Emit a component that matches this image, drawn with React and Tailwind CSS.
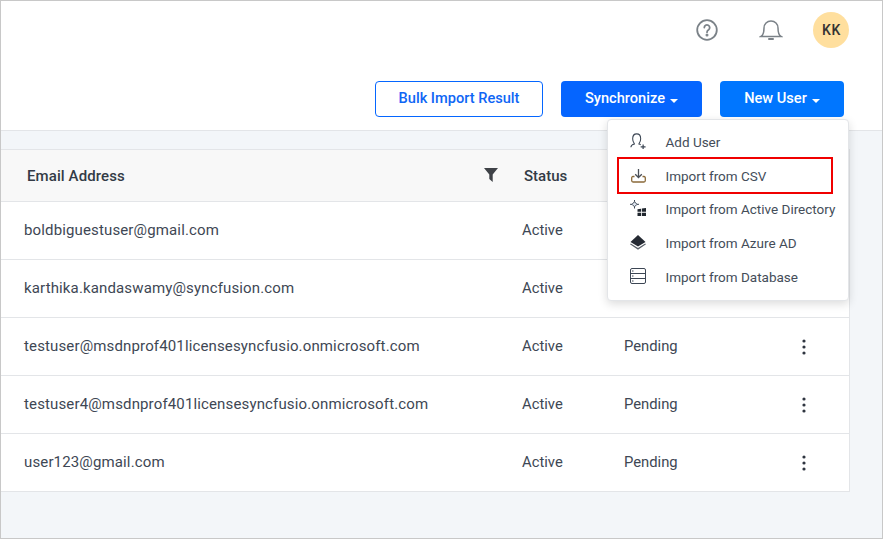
import React from "react";

const rows = [
  ["boldbiguestuser@gmail.com", "Active", ""],
  ["karthika.kandaswamy@syncfusion.com", "Active", ""],
  ["testuser@msdnprof401licensesyncfusio.onmicrosoft.com", "Active", "Pending"],
  ["testuser4@msdnprof401licensesyncfusio.onmicrosoft.com", "Active", "Pending"],
  ["user123@gmail.com", "Active", "Pending"],
];

const Caret = () => (
  <svg width="8" height="4" viewBox="0 0 8 4" className="ml-[5px] mt-[3px]"><path d="M0 0h8L4 4z" fill="#fff" /></svg>
);

const Dots = () => (
  <svg width="4" height="16" viewBox="0 0 4 16"><circle cx="2" cy="2" r="1.6" fill="#2f3540" /><circle cx="2" cy="8" r="1.6" fill="#2f3540" /><circle cx="2" cy="14" r="1.6" fill="#2f3540" /></svg>
);

const items = [
  ["Add User", <svg width="16" height="16" viewBox="0 0 18 18" fill="none" stroke="#3c4654" strokeWidth="1.2"><path d="M1 16c0-2 1.500-3 4-3.600 0-1-2-2-2-6C3 3 5 1 7.500 1S12 3 12 6.400c0 4-2 5-2 6 .8.200 1.500.500 2 .8" /><path d="M12 15.500h5.500M14.750 13v5" strokeWidth="1.400" /></svg>],
  ["Import from CSV", <svg width="15" height="14" viewBox="0 0 15 14" fill="none" strokeWidth="1.300" className="translate-y-px"><path d="M7.500 0v8.500M4.200 5.200 7.500 8.500 10.800 5.200" stroke="#4a4f57" /><path d="M3.500 7.500H2C1.200 7.500.7 8.200.7 9v2.500c0 .9.500 1.500 1.300 1.500h11c.8 0 1.300-.6 1.300-1.500V9c0-.8-.5-1.500-1.300-1.500h-1.500" stroke="#8a6a3a" /></svg>],
  ["Import from Active Directory", <svg width="16" height="16" viewBox="0 0 16 16"><path d="M4.500 1.800 7 4.300 4.500 6.800 2 4.300z" fill="#dfe6f0" stroke="#3c4654" /><path d="M0 4.300h2M7 4.300h2M4.500 0v1.800M4.500 6.800v1.700" stroke="#3c4654" /><path d="M7.500 9.300l3.500-.5v3H7.500zM11.800 8.600l4.200-.6v3.800h-4.200zM7.500 12.700H11V16H7.500zM11.800 12.700H16V16h-4.200z" fill="#20262e" /></svg>],
  ["Import from Azure AD", <svg width="16" height="15" viewBox="0 0 16 15"><path d="M8 0l7.500 7L8 11.500.5 7z" fill="#252a33" /><path d="M.8 8.500 8 13l7.200-4.500.8.800L8 14.800 0 9.300z" fill="#5a6068" /></svg>],
  ["Import from Database", <svg width="16" height="16" viewBox="0 0 16 16" fill="none" stroke="#3c4654" strokeWidth="1"><rect x=".5" y=".5" width="15" height="15" rx="1.500" /><path d="M.5 5.500h15M.5 10.500h15" /><path d="M2 3h1.500M2 8h1.500M2 13h1.500" /></svg>],
];

export default function App() {
  return (
    <div className="relative h-[539px] w-[883px] overflow-hidden border border-[#c8c8c8] bg-[#f3f6f9] font-['Roboto',sans-serif] text-[#3c4654]">
      <header className="h-[130px] border-b border-[#e3e5e8] bg-white">
        <div className="flex h-[58px] items-center justify-end pr-[33px]">
          <svg width="24" height="24" viewBox="0 0 24 24" fill="none" stroke="#7b8288" strokeWidth="1.800" className="mr-[40px]">
            <circle cx="12" cy="12" r="9.800" />
            <path d="M9.300 9.600a2.700 2.700 0 1 1 4.300 2.200c-1 .7-1.600 1.200-1.600 2.400" strokeLinecap="round" />
            <circle cx="12" cy="17" r=".6" fill="#7b8288" />
          </svg>
          <svg width="24" height="24" viewBox="0 0 24 24" fill="none" stroke="#7b8288" strokeWidth="1.500" className="mr-[30px]">
            <path d="M2 18.500h20c-2.500-1.500-3-3.500-3-8.500 0-4-3-7-7-7s-7 3-7 7c0 5-.5 7-3 8.500z" />
            <path d="M10 21h4" strokeWidth="2" strokeLinecap="round" />
          </svg>
          <div className="flex h-9 w-9 items-center justify-center rounded-full bg-[#ffdf9e] pl-px text-sm font-medium tracking-[.6px] text-[#333]">KK</div>
        </div>
        <div className="mt-[22px] flex justify-end gap-[18px] pr-[38px] text-[14.600px] font-medium">
          <button className="h-9 w-[168px] rounded border border-[#0566ff] bg-white text-[#0f66f5]">Bulk Import Result</button>
          <button className="flex h-9 w-[141px] items-center justify-center rounded bg-[#0565ff] text-white">Synchronize<Caret /></button>
          <button className="flex h-9 w-[124px] items-center justify-center rounded bg-[#0076ff] text-white">New User<Caret /></button>
        </div>
      </header>

      <main className="ml-0 mt-[18px] w-[849px] border-y border-r border-[#e3e5e8] bg-white">
        <div className="flex h-[51px] items-center bg-[#f8f8f8] pt-px text-[15px] font-medium text-[#333b46]">
          <div className="w-[483px] pl-[26px] tracking-[.1px]">Email Address</div>
          <svg width="14" height="14" viewBox="0 0 14 14" className="-mt-0.5"><path d="M0 0h14L8.700 6.500V14L5.300 11V6.500z" fill="#3f4247" /></svg>
          <div className="ml-[26px]">Status</div>
        </div>
        {rows.map(([email, status, reg]) => (
          <div key={email} className="flex h-[58px] items-center border-t border-[#e3e5e8] text-[15px] text-[#3e4754]">
            <div className="w-[521px] pl-[23px] tracking-[.14px]">{email}</div>
            <div className="w-[102px] text-[14.800px]">{status}</div>
            <div className="w-[170px] text-[14.800px]">{reg}</div>
            {reg && <div className="ml-[8px]"><Dots /></div>}
          </div>
        ))}
      </main>

      <div className="absolute left-[606px] top-[118px] h-[182px] w-[242px] rounded-sm border border-[#e3e5e8] bg-white pt-[5px] text-[13.500px] shadow-[0_3px_10px_rgba(0,0,0,0.14)]">
        {items.map(([label, icon]) => (
          <div key={label} className="flex h-[33.800px] items-center">
            <span className="-mt-0.5 flex w-[57.500px] justify-center pl-[3px]">{icon}</span>
            <span className="whitespace-nowrap text-[#444d59]">{label}</span>
          </div>
        ))}
        <div className="absolute left-[9px] top-[37px] h-[37px] w-[216px] border-2 border-[#f00000]" />
      </div>
    </div>
  );
}
